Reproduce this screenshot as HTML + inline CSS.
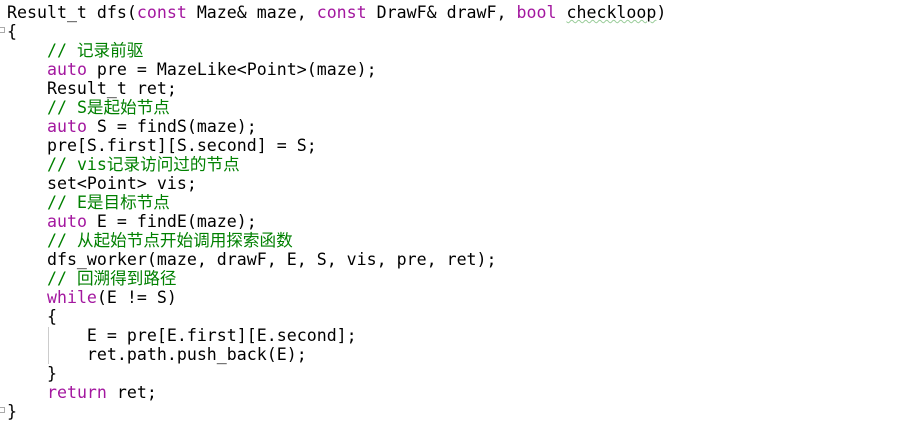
<!DOCTYPE html>
<html><head><meta charset="utf-8"><style>
html,body{margin:0;padding:0;background:#fff;width:910px;height:416px;overflow:hidden}
pre{margin:0;position:absolute;left:7px;top:3px;font-family:"DejaVu Sans Mono","Noto Sans CJK SC",monospace;font-size:16.6px;line-height:19px;color:#000}
.k{color:#a3179f}
.c{color:#008000}
.sq{text-decoration:underline wavy #9c9;text-decoration-thickness:1px}
.guide{position:absolute;left:48px;top:327px;width:1px;height:37px;background:#ccc}
.fold{position:absolute;left:0;width:5px;height:6px;border:1px solid #aaa;border-left:none;box-sizing:border-box}
</style></head><body>
<div class="guide"></div>
<div class="fold" style="top:27px"></div>
<div class="fold" style="top:407px"></div>
<pre>Result_t dfs(<span class="k">const</span> Maze&amp; maze, <span class="k">const</span> DrawF&amp; drawF, <span class="k">bool</span> <span class="sq">checkloop</span>)
{
    <span class="c">// 记录前驱</span>
    <span class="k">auto</span> pre = MazeLike&lt;Point&gt;(maze);
    Result_t ret;
    <span class="c">// S是起始节点</span>
    <span class="k">auto</span> S = findS(maze);
    pre[S.first][S.second] = S;
    <span class="c">// vis记录访问过的节点</span>
    set&lt;Point&gt; vis;
    <span class="c">// E是目标节点</span>
    <span class="k">auto</span> E = findE(maze);
    <span class="c">// 从起始节点开始调用探索函数</span>
    dfs_worker(maze, drawF, E, S, vis, pre, ret);
    <span class="c">// 回溯得到路径</span>
    <span class="k">while</span>(E != S)
    {
        E = pre[E.first][E.second];
        ret.path.push_back(E);
    }
    <span class="k">return</span> ret;
}</pre>
</body></html>
